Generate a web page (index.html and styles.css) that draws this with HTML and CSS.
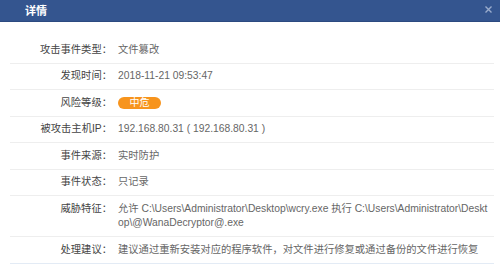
FILE: index.html
```html
<!DOCTYPE html>
<html lang="zh-CN">
<head>
    <meta charset="UTF-8">
    <meta name="viewport" content="width=device-width, initial-scale=1.0">
    <title>详情</title>
    <link rel="stylesheet" href="styles.css">
</head>
<body>
    <div class="dialog-head">
        <span class="dialog-title">详情</span>
        <svg class="dialog-close" width="7" height="7" viewBox="0 0 7 7">
            <path d="M0.5 0.5 L6.5 6.5 M6.5 0.5 L0.5 6.5" stroke="#9aaccc" stroke-width="1.4" fill="none"/>
        </svg>
    </div>

    <div class="detail">
        <div class="row">
            <div class="label">攻击事件类型：</div>
            <div class="value">文件篡改</div>
        </div>
        <div class="row">
            <div class="label">发现时间：</div>
            <div class="value">2018-11-21 09:53:47</div>
        </div>
        <div class="row">
            <div class="label">风险等级：</div>
            <div class="value"><span class="badge">中危</span></div>
        </div>
        <div class="row">
            <div class="label">被攻击主机IP：</div>
            <div class="value">192.168.80.31 ( 192.168.80.31 )</div>
        </div>
        <div class="row">
            <div class="label">事件来源：</div>
            <div class="value">实时防护</div>
        </div>
        <div class="row">
            <div class="label">事件状态：</div>
            <div class="value">只记录</div>
        </div>
        <div class="row">
            <div class="label">威胁特征：</div>
            <div class="value">允许 C:\Users\Administrator\Desktop\wcry.exe 执行 C:\Users\Administrator\Desktop\@WanaDecryptor@.exe</div>
        </div>
        <div class="row last">
            <div class="label">处理建议：</div>
            <div class="value">建议通过重新安装对应的程序软件，对文件进行修复或通过备份的文件进行恢复</div>
        </div>
    </div>
</body>
</html>
```

FILE: styles.css
```css
*{
    margin: 0;
    padding: 0;
    box-sizing: border-box;
}
body{
    background-color: white;
    font-family: "Liberation Sans", "Noto Sans CJK SC", sans-serif;
    font-size: 10.3px;
}
.dialog-head{
    height: 22px;
    background-color: #34558f;
    border-bottom: 1px solid #2c4a80;
    display: flex;
    align-items: center;
    justify-content: space-between;
    padding: 0 8px 2px 25px;
}
.dialog-title{
    color: white;
    font-size: 11px;
    font-weight: bold;
}
.dialog-close{
    display: block;
}
.detail{
    margin: 15px 6px 0 10px;
}
.row{
    display: flex;
    border-bottom: 1px solid #eeeeee;
    padding: 5.5px 0;
    line-height: 14.5px;
}
.row.last{
    border-bottom-color: #e3ebf5;
}
.label{
    width: 102px;
    flex-shrink: 0;
    text-align: right;
    color: #444;
}
.value{
    flex: 1;
    padding-left: 6px;
    padding-right: 4px;
    color: #666;
    word-break: break-all;
}
.badge{
    display: inline-block;
    width: 43px;
    height: 12px;
    line-height: 12px;
    border-radius: 6px;
    background-color: #f7941d;
    color: white;
    font-size: 10px;
    text-align: center;
    vertical-align: middle;
}
```
